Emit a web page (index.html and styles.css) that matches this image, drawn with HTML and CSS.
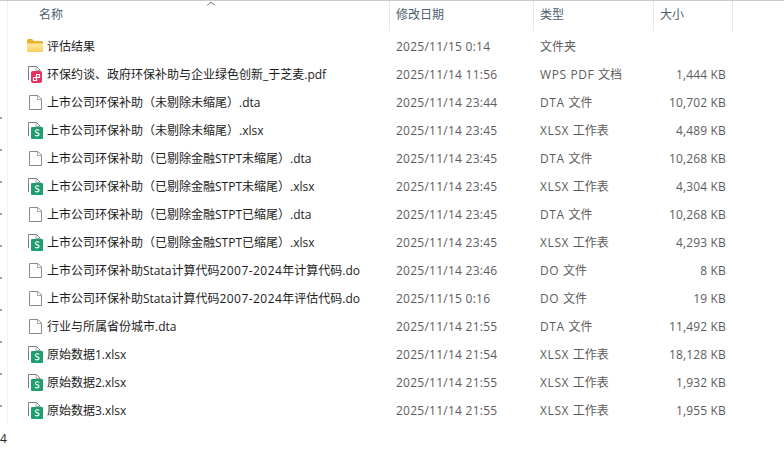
FILE: index.html
```html
<!DOCTYPE html>
<html lang="zh-CN">
<head>
    <meta charset="UTF-8">
    <title>评估结果</title>
    <link rel="stylesheet" href="styles.css">
</head>
<body>
<svg width="0" height="0" class="defs">
    <defs>
        <linearGradient id="folder-front" x1="0" y1="0" x2="0" y2="1">
            <stop offset="0" stop-color="#fdeaa0"/>
            <stop offset="1" stop-color="#f8cf5c"/>
        </linearGradient>
    </defs>
    <symbol id="i-folder" viewBox="0 0 16 13">
        <path d="M0 1.500q0-1.500 1.500-1.500h3.500l2 2h8q1 0 1 1v8.500q0 1-1 1H1q-1 0-1-1z" fill="#eeb02e"/>
        <path d="M0 4.500h16v7.500q0 1-1 1H1q-1 0-1-1z" fill="url(#folder-front)"/>
    </symbol>
    <symbol id="i-file" viewBox="0 0 13 15">
        <path d="M.5.500h8.500l3.500 3.500v10.500h-12z" fill="#fff" stroke="#8a8a8a"/>
        <path d="M8.500.500v4h4" fill="none" stroke="#a5a5a5"/>
    </symbol>
    <symbol id="i-sheet" viewBox="0 0 15 17">
        <path d="M.5 14V.500h8l3.500 3.500v2" fill="#fff" stroke="#7d7d7d"/>
        <path d="M8 .500v4h4" fill="none" stroke="#a5a5a5"/>
        <rect x="3" y="5" width="12" height="12" rx="1" fill="#1f9e6e"/>
        <path d="M11.300 8.400q-.8-.6-2.100-.6-1.700 0-1.700 1.400t1.800 1.700q1.800.4 1.800 1.600t-1.900 1.400q-1.300 0-2.200-.7" fill="none" stroke="#fff" stroke-width="1.100"/>
    </symbol>
    <symbol id="i-pdf" viewBox="0 0 15 17">
        <path d="M.5 14V.500h8l3.500 3.500v2" fill="#fff" stroke="#7d7d7d"/>
        <path d="M8 .500v4h4" fill="none" stroke="#a5a5a5"/>
        <rect x="3" y="5" width="11" height="12" rx="2" fill="#e8305f"/>
        <path d="M5.500 11.500h3v3h-3zM8.500 11.500v-3h3v3z" fill="none" stroke="#fff" stroke-width="1.200"/>
    </symbol>
</svg>

<div class="explorer">
    <div class="gutter"><div class="dots"></div></div>

    <div class="head">
        <div class="col name-col">名称<span class="sort"></span></div>
        <div class="col">修改日期</div>
        <div class="col">类型</div>
        <div class="col">大小</div>
    </div>

    <div class="row">
        <div class="name"><svg class="ico ico-folder"><use href="#i-folder"/></svg>评估结果</div>
        <div class="date">2025/11/15 0:14</div><div>文件夹</div><div class="size"></div>
    </div>
    <div class="row">
        <div class="name"><svg class="ico"><use href="#i-pdf"/></svg>环保约谈、政府环保补助与企业绿色创新_于芝麦.pdf</div>
        <div class="date">2025/11/14 11:56</div><div><span class="lat">WPS PDF </span>文档</div><div class="size">1,444 KB</div>
    </div>
    <div class="row">
        <div class="name"><svg class="ico ico-file"><use href="#i-file"/></svg>上市公司环保补助（未剔除未缩尾）.dta</div>
        <div class="date">2025/11/14 23:44</div><div><span class="lat">DTA </span>文件</div><div class="size">10,702 KB</div>
    </div>
    <div class="row">
        <div class="name"><svg class="ico"><use href="#i-sheet"/></svg>上市公司环保补助（未剔除未缩尾）.xlsx</div>
        <div class="date">2025/11/14 23:45</div><div><span class="lat">XLSX </span>工作表</div><div class="size">4,489 KB</div>
    </div>
    <div class="row">
        <div class="name"><svg class="ico ico-file"><use href="#i-file"/></svg>上市公司环保补助（已剔除金融STPT未缩尾）.dta</div>
        <div class="date">2025/11/14 23:45</div><div><span class="lat">DTA </span>文件</div><div class="size">10,268 KB</div>
    </div>
    <div class="row">
        <div class="name"><svg class="ico"><use href="#i-sheet"/></svg>上市公司环保补助（已剔除金融STPT未缩尾）.xlsx</div>
        <div class="date">2025/11/14 23:45</div><div><span class="lat">XLSX </span>工作表</div><div class="size">4,304 KB</div>
    </div>
    <div class="row">
        <div class="name"><svg class="ico ico-file"><use href="#i-file"/></svg>上市公司环保补助（已剔除金融STPT已缩尾）.dta</div>
        <div class="date">2025/11/14 23:45</div><div><span class="lat">DTA </span>文件</div><div class="size">10,268 KB</div>
    </div>
    <div class="row">
        <div class="name"><svg class="ico"><use href="#i-sheet"/></svg>上市公司环保补助（已剔除金融STPT已缩尾）.xlsx</div>
        <div class="date">2025/11/14 23:45</div><div><span class="lat">XLSX </span>工作表</div><div class="size">4,293 KB</div>
    </div>
    <div class="row">
        <div class="name"><svg class="ico ico-file"><use href="#i-file"/></svg><span>上市公司环保补助Stata计算代码<span class="num">2007-2024</span>年计算代码.do</span></div>
        <div class="date">2025/11/14 23:46</div><div><span class="lat">DO </span>文件</div><div class="size">8 KB</div>
    </div>
    <div class="row">
        <div class="name"><svg class="ico ico-file"><use href="#i-file"/></svg><span>上市公司环保补助Stata计算代码<span class="num">2007-2024</span>年评估代码.do</span></div>
        <div class="date">2025/11/15 0:16</div><div><span class="lat">DO </span>文件</div><div class="size">19 KB</div>
    </div>
    <div class="row">
        <div class="name"><svg class="ico ico-file"><use href="#i-file"/></svg>行业与所属省份城市.dta</div>
        <div class="date">2025/11/14 21:55</div><div><span class="lat">DTA </span>文件</div><div class="size">11,492 KB</div>
    </div>
    <div class="row">
        <div class="name"><svg class="ico"><use href="#i-sheet"/></svg>原始数据1.xlsx</div>
        <div class="date">2025/11/14 21:54</div><div><span class="lat">XLSX </span>工作表</div><div class="size">18,128 KB</div>
    </div>
    <div class="row">
        <div class="name"><svg class="ico"><use href="#i-sheet"/></svg>原始数据2.xlsx</div>
        <div class="date">2025/11/14 21:55</div><div><span class="lat">XLSX </span>工作表</div><div class="size">1,932 KB</div>
    </div>
    <div class="row">
        <div class="name"><svg class="ico"><use href="#i-sheet"/></svg>原始数据3.xlsx</div>
        <div class="date">2025/11/14 21:55</div><div><span class="lat">XLSX </span>工作表</div><div class="size">1,955 KB</div>
    </div>
    <div class="stray">4</div>
</div>
</body>
</html>
```

FILE: styles.css
```css
*{
    padding:0;
    margin:0;
    box-sizing:border-box;
}

html,body{
    height:100%;
    overflow:hidden;
    background:#fff;
}

body{
    font-family:"Open Sans","Noto Sans CJK SC",sans-serif;
    font-size:12px;
    color:#5d5d5d;
}

.defs{
    position:absolute;
}

.explorer{
    position:relative;
    height:451px;
    border-top:1px solid #c5cccb;
}

/* 左边的细线和小圆点 */
.gutter{
    position:absolute;
    left:0;
    top:0;
    width:8px;
    height:424px;
    border-right:1px solid #f3f3f3;
}

.dots{
    position:absolute;
    left:0;
    top:116px;
    width:2px;
    height:292px;
    background:linear-gradient(#a0a0a0 2px,transparent 2px) 0 0/2px 32px repeat-y;
}

.head{
    display:grid;
    grid-template-columns:389px 144px 120px 80px;
    height:32px;
    color:#4e5d6c;
}

.col{
    display:flex;
    align-items:center;
    height:30px;
    padding:0 0 4px 6px;
    border-left:1px solid #e8e8e8;
}

.col:last-child{
    border-right:1px solid #e8e8e8;
}

.name-col{
    position:relative;
    border-left:none;
    padding-left:39px;
}

.sort{
    position:absolute;
    left:208px;
    top:1px;
    width:6px;
    height:6px;
    border-left:1px solid #777;
    border-top:1px solid #777;
    transform:scale(1,.75) rotate(45deg);
}

.row{
    display:grid;
    grid-template-columns:389px 144px 120px 73px;
    align-items:center;
    height:28px;
    line-height:28px;
}

.row > div{
    padding-left:7px;
    white-space:nowrap;
}

.row > .name{
    display:flex;
    align-items:center;
    padding-left:28px;
    color:#1b1b1b;
}

.row > .size{
    padding:0;
    text-align:right;
    letter-spacing:.15px;
}

.date{
    letter-spacing:.25px;
}

.lat{
    letter-spacing:.6px;
}

.num{
    letter-spacing:.45px;
}

.ico{
    width:15px;
    height:17px;
    margin-right:4px;
    margin-bottom:1px;
    flex:none;
}

.ico-folder{
    width:16px;
    height:13px;
    margin-left:-1px;
    margin-bottom:3px;
}

.ico-file{
    width:13px;
    height:15px;
    margin-left:1px;
    margin-right:5px;
}

.stray{
    position:absolute;
    left:0;
    top:430px;
    color:#222;
    line-height:16px;
}
```
